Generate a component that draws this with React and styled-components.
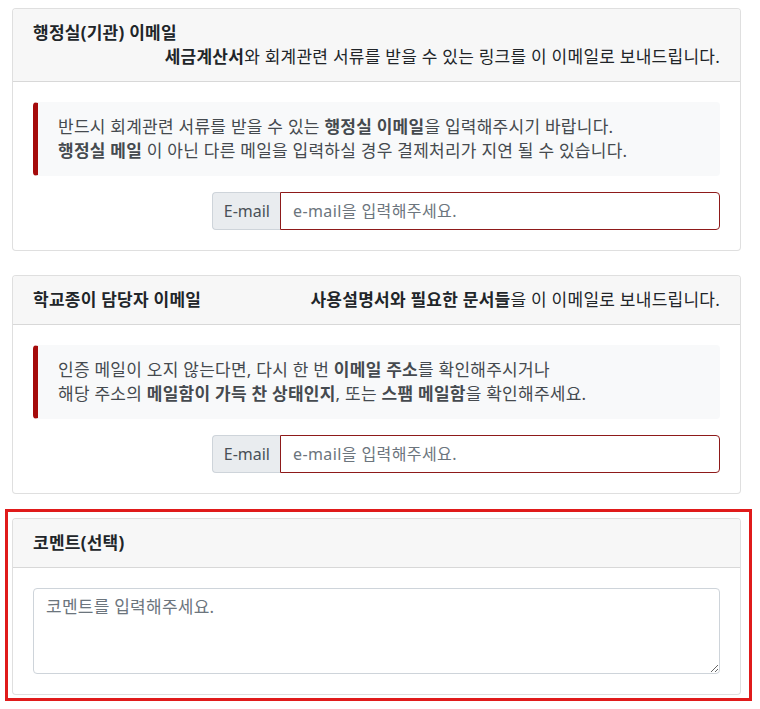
import styled, { createGlobalStyle } from "styled-components";

const GlobalStyle = createGlobalStyle`
  * {
    box-sizing: border-box;
  }
  body {
    margin: 0;
    background: #fff;
    color: #212529;
    font-family: "Noto Sans", "Noto Sans CJK KR", sans-serif;
    font-size: 17px;
    letter-spacing: 0.25px;
    line-height: 24px;
  }
`;

const Page = styled.div`
  padding: 8px 19px 0 12px;
  display: flex;
  flex-direction: column;
  gap: 24px;
`;

const Card = styled.section`
  border: 1px solid rgba(0, 0, 0, 0.125);
  border-radius: 4px;
  background: #fff;
`;

const Highlight = styled.div`
  margin: -9px -11px 0 -7px;
  padding: 6px 8px 3px 4px;
  border: 3px solid #e01b1b;
`;

const Header = styled.div`
  display: flex;
  flex-wrap: wrap;
  justify-content: space-between;
  padding: 12px 20px;
  background: #f7f7f7;
  border-bottom: 1px solid rgba(0, 0, 0, 0.125);
  border-radius: 3px 3px 0 0;
`;

const Title = styled.h3`
  margin: 0;
  font-size: 17px;
  font-weight: 700;
  line-height: 24px;
`;

const Note = styled.span`
  margin-left: auto;
  flex-basis: ${(p) => (p.$stacked ? "100%" : "auto")};
  text-align: right;
`;

const Body = styled.div`
  padding: 20px;
`;

const Alert = styled.div`
  margin-bottom: 16px;
  padding: 12px 20px;
  border: 1px solid transparent;
  border-left: 5px solid #a50b0b;
  border-radius: 4px;
  background: #f8f9fa;
  color: #454a4f;
`;

const InputRow = styled.div`
  display: flex;
  justify-content: flex-end;
`;

const Addon = styled.span`
  display: flex;
  align-items: center;
  height: 38px;
  padding: 6px 10px 6px 11px;
  background: #e9ecef;
  border: 1px solid #ced4da;
  border-right: 0;
  border-radius: 4px 0 0 4px;
  color: #495057;
  font-size: 16px;
  letter-spacing: 0;
`;

const EmailInput = styled.input`
  width: 440px;
  height: 38px;
  padding: 6px 12px;
  border: 1px solid #8e1a1a;
  border-radius: 0 4px 4px 0;
  font: inherit;
  font-size: 16px;
  letter-spacing: 0.4px;
  color: #495057;
  outline: none;
  &::placeholder {
    color: #6c757d;
  }
`;

const Comment = styled.textarea`
  display: block;
  width: 100%;
  height: 86px;
  padding: 6px 12px;
  border: 1px solid #ced4da;
  border-radius: 4px;
  font: inherit;
  letter-spacing: 0.25px;
  color: #495057;
  outline: none;
  &::placeholder {
    color: #6c757d;
  }
`;

function EmailField() {
  return (
    <InputRow>
      <Addon>E-mail</Addon>
      <EmailInput type="email" placeholder="e-mail을 입력해주세요." />
    </InputRow>
  );
}

export default function App() {
  return (
    <>
      <GlobalStyle />
      <Page>
        <Card>
          <Header>
            <Title>행정실(기관) 이메일</Title>
            <Note $stacked>
              <b>세금계산서</b>와 회계관련 서류를 받을 수 있는 링크를 이 이메일로 보내드립니다.
            </Note>
          </Header>
          <Body>
            <Alert>
              반드시 회계관련 서류를 받을 수 있는 <b>행정실 이메일</b>을 입력해주시기 바랍니다.
              <br />
              <b>행정실 메일</b> 이 아닌 다른 메일을 입력하실 경우 결제처리가 지연 될 수 있습니다.
            </Alert>
            <EmailField />
          </Body>
        </Card>

        <Card>
          <Header>
            <Title>학교종이 담당자 이메일</Title>
            <Note>
              <b>사용설명서와 필요한 문서들</b>을 이 이메일로 보내드립니다.
            </Note>
          </Header>
          <Body>
            <Alert>
              인증 메일이 오지 않는다면, 다시 한 번 <b>이메일 주소</b>를 확인해주시거나
              <br />
              해당 주소의 <b>메일함이 가득 찬 상태인지</b>, 또는 <b>스팸 메일함</b>을 확인해주세요.
            </Alert>
            <EmailField />
          </Body>
        </Card>

        <Highlight>
          <Card>
            <Header>
              <Title>코멘트(선택)</Title>
            </Header>
            <Body>
              <Comment rows={3} placeholder="코멘트를 입력해주세요." />
            </Body>
          </Card>
        </Highlight>
      </Page>
    </>
  );
}
